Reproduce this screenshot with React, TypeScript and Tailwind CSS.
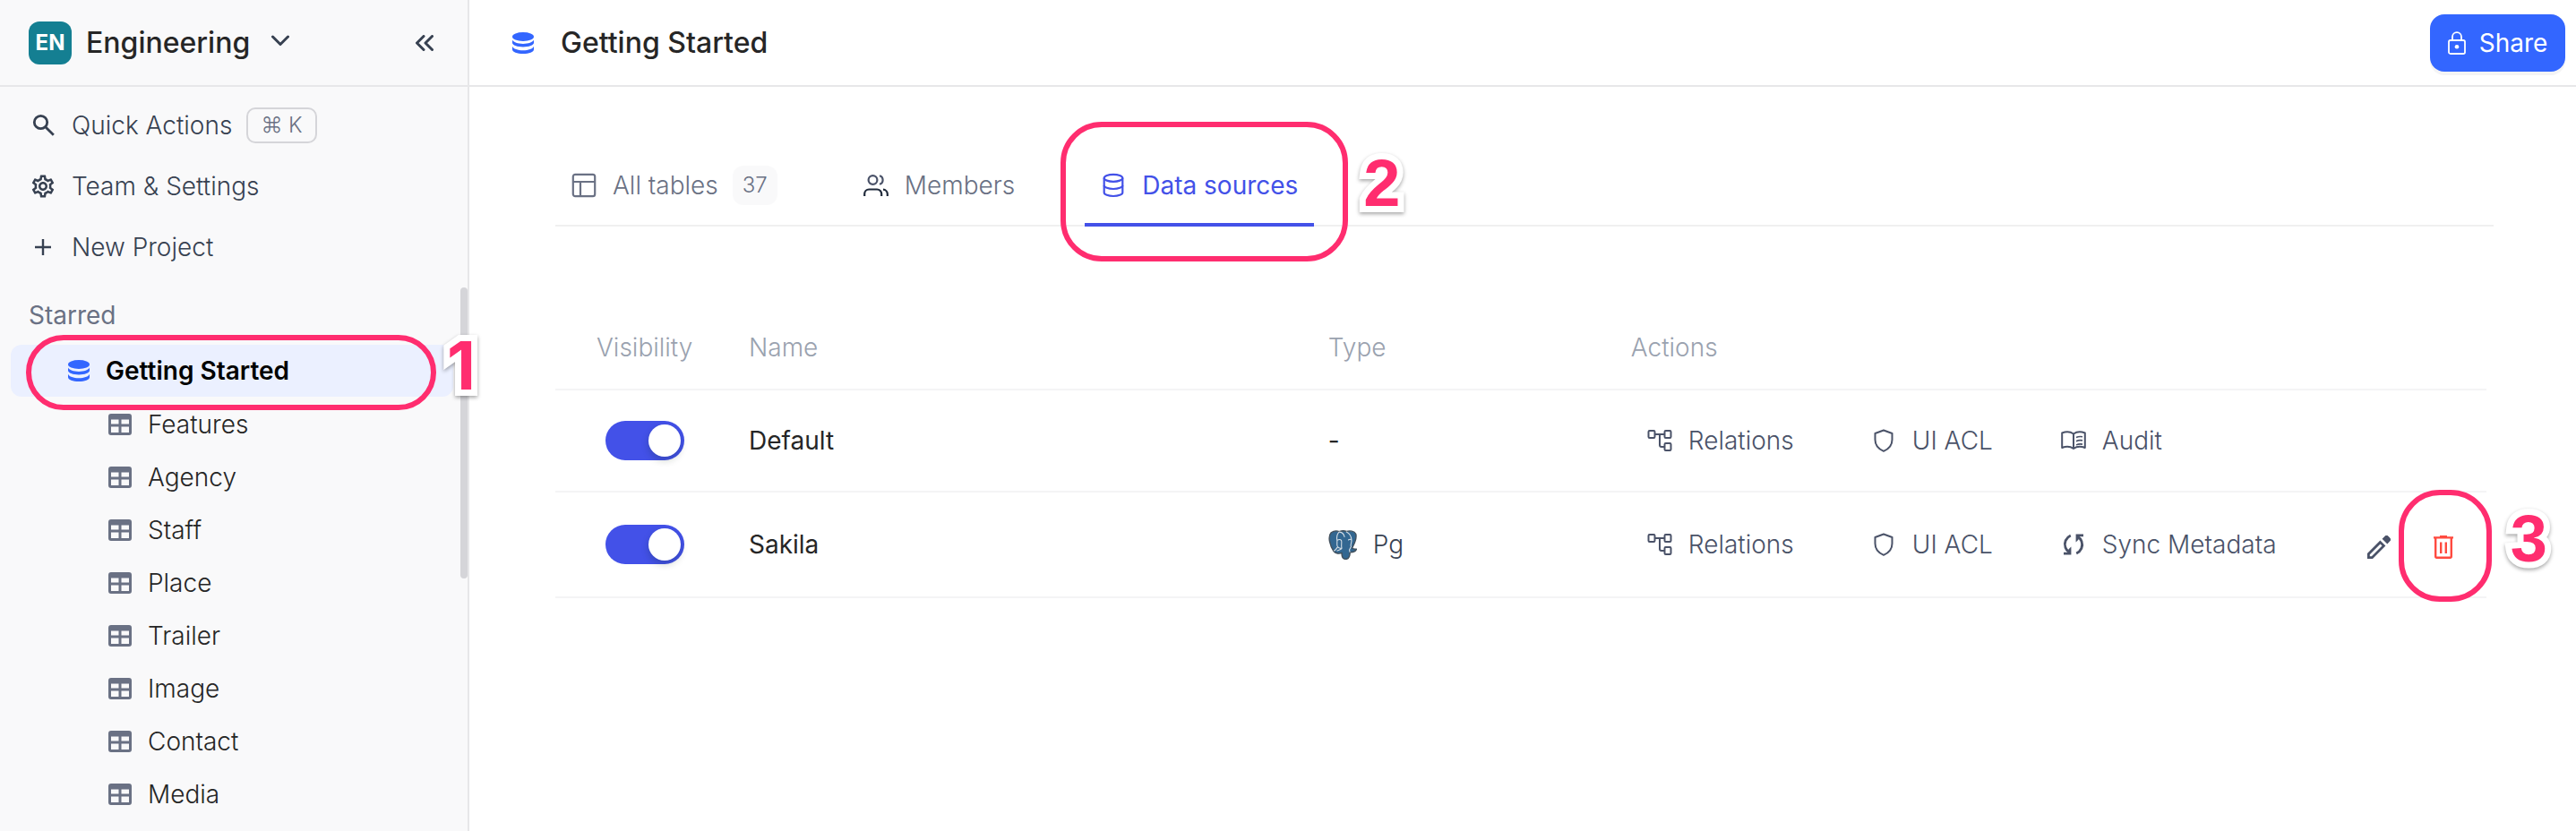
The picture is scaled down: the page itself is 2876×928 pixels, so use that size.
import type { ReactNode } from "react";
import { MdOutlineSettings } from "react-icons/md";

type IconProps = { className?: string };

function DatabaseSolid({ className }: IconProps) {
  return (
    <svg viewBox="0 0 24 24" className={className} fill="currentColor" aria-hidden="true">
      <ellipse cx="12" cy="5" rx="12" ry="5" />
      <path d="M0 8.6v3.2c0 2.6 5.4 4.700 12 4.700s12-2.100 12-4.700V8.600c-1.200 2.700-6.200 4.400-12 4.400S1.200 11.300 0 8.600Z" />
      <path d="M0 15.800v3.400C0 21.900 5.400 24 12 24s12-2.100 12-4.800v-3.400c-1.200 2.800-6.200 4.500-12 4.500S1.200 18.600 0 15.800Z" />
    </svg>
  );
}

function DatabaseOutline({ className }: IconProps) {
  return (
    <svg viewBox="0 0 28 28" className={className} fill="none" stroke="currentColor" strokeWidth="2.200" aria-hidden="true">
      <ellipse cx="14" cy="5.800" rx="10.300" ry="4" />
      <path d="M3.700 5.800v16.200c0 2.200 4.600 4 10.300 4s10.300-1.800 10.300-4V5.800" />
      <path d="M3.700 14c0 2.200 4.600 4 10.300 4s10.300-1.800 10.300-4" />
    </svg>
  );
}

function TableGrid({ className }: IconProps) {
  return (
    <svg viewBox="0 0 26 24" className={className} aria-hidden="true">
      <path
        fill="currentColor"
        fillRule="evenodd"
        d="M3 0h20a3 3 0 0 1 3 3v18a3 3 0 0 1-3 3H3a3 3 0 0 1-3-3V3a3 3 0 0 1 3-3Zm0 6.500v5h8.500v-5Zm11.500 0v5H23v-5ZM3 14.500V21h8.500v-6.500Zm11.500 0V21H23v-6.500Z"
      />
    </svg>
  );
}

function LayoutIcon({ className }: IconProps) {
  return (
    <svg viewBox="0 0 28 28" className={className} fill="none" stroke="currentColor" strokeWidth="2.200" aria-hidden="true">
      <rect x="1.800" y="1.800" width="24.400" height="24.400" rx="2.400" />
      <path d="M1.800 10h24.400M10 10v16.200" />
    </svg>
  );
}

function UsersIcon({ className }: IconProps) {
  return (
    <svg viewBox="0 0 28 28" className={className} fill="none" strokeWidth="2.200" aria-hidden="true">
      <circle cx="10.500" cy="8" r="4.900" stroke="#4a5268" />
      <path d="M18 3.200a5 5 0 0 1 0 9.600" stroke="#4a5268" />
      <path d="M1.200 26v-2.500a5 5 0 0 1 5-5h9a5 5 0 0 1 5 5V26M22 18.700a5 5 0 0 1 4.800 4.800V26" stroke="#1f293a" />
    </svg>
  );
}

function RelationsIcon({ className }: IconProps) {
  return (
    <svg viewBox="0 0 28 26" className={className} fill="none" stroke="currentColor" strokeWidth="2" aria-hidden="true">
      <rect x="1.500" y="2" width="7" height="8" rx="1.200" />
      <rect x="19.500" y="2" width="7" height="8" rx="1.200" />
      <rect x="19.500" y="16" width="7" height="8" rx="1.200" />
      <path d="M8.500 6h11M14 6v12a2 2 0 0 0 2 2h3.500" />
    </svg>
  );
}

function ShieldIcon({ className }: IconProps) {
  return (
    <svg viewBox="0 0 22 26" className={className} fill="none" stroke="currentColor" strokeWidth="2" strokeLinejoin="round" aria-hidden="true">
      <path d="M11 1.500 20.500 5V12c0 6-4 10.500-9.500 12.800C5.500 22.500 1.500 18 1.500 12V5Z" />
    </svg>
  );
}

function BookIcon({ className }: IconProps) {
  return (
    <svg viewBox="0 0 28 22" className={className} fill="none" stroke="currentColor" strokeWidth="2" strokeLinejoin="round" aria-hidden="true">
      <path d="M14 3.500C10.500 1 5 1 1.200 2.500v16.500c4-1.500 9.300-1.500 12.800 1 3.500-2.500 8.800-2.500 12.800-1V2.500C23 1 17.500 1 14 3.500ZM14 3.500V20" />
      <path strokeWidth="1.600" d="M17 7.500c2-1 4.500-1.300 7-.8M17 11.700c2-1 4.500-1.300 7-.8M17 15.900c2-1 4.500-1.300 7-.8" />
    </svg>
  );
}

function SyncIcon({ className }: IconProps) {
  return (
    <svg viewBox="0 0 24 24" className={className} fill="none" stroke="currentColor" strokeWidth="2.800" aria-hidden="true">
      <path d="M8.800 2C3.500 4.500 1 10 3 15.500c.7 2 2 3.700 4 5" />
      <path d="M15.200 22c5.300-2.500 7.800-8 5.800-13.500-.7-2-2-3.700-4-5" />
      <path fill="currentColor" stroke="none" d="M1 23.500h8.400V14.500l-3 3v3.200H1ZM23 .5h-8.400V9.500l3-3V3.300H23Z" />
    </svg>
  );
}

function PostgresLogo({ className }: IconProps) {
  return (
    <svg viewBox="0 0 32 33" className={className} fill="none" strokeLinecap="round" strokeLinejoin="round" aria-hidden="true">
      <path
        fill="#336791"
        stroke="#42505c"
        strokeWidth="1.400"
        d="M3.200 2.800C6 .8 9.800.6 12.200 1.700 15 .6 18 .6 20.200 1.400 24 .4 29 .8 30.700 4.200 32 8.500 29 15.500 26.600 19.800c1 1.600 3 1.200 4.800 1.500-1 2.900-4.600 3.600-7.200 3.500 0 3.200-.8 7.600-4.800 7.600-3.800 0-4.400-3.400-4.400-7-2.600 1.300-7 1-9-1.900C2.200 18-1.200 7.600 3.200 2.800Z"
      />
      <path
        stroke="#d5dee6"
        strokeWidth="1.100"
        d="M12 2.200c-2.600 2.600-2.800 6-2.200 9.500.3 2.600-.8 4.600.6 6.800 1 1.500 2.600 2 4.200 1.600M6.500 23c1.800-1 2.200-2.200 3.500-3.500M12.500 2.100c3.200.3 5 2.600 5.500 5.400M20.300 1.900c3.600 1.800 5.600 6 5.700 9.400.2 2.700-1.600 4.600-.6 7.400M10 11.400c1.600-1.200 3.600-1.200 4.600.2.800 2.600-.6 5.400.4 8.400M15 20.500c-1.500 1.400-3.500 1.800-5 2.500M22.500 11c1-.9 2.400-.9 3.400 0M24 24.300c-.8-1.500-.6-3 .8-4.600"
      />
    </svg>
  );
}

function PencilIcon({ className }: IconProps) {
  return (
    <svg viewBox="0 0 26 26" className={className} aria-hidden="true">
      <path
        fill="currentColor"
        fillRule="evenodd"
        d="M0 20 14.400 5.600l6 6L6 26H0Zm2.800 1.200v2h2L16.500 11.500l-2-2Z"
      />
      <path fill="currentColor" d="m16.600 3.700 2.800-2.800a3 3 0 0 1 4.200 0l1.500 1.500a3 3 0 0 1 0 4.200l-2.800 2.800Z" />
    </svg>
  );
}

function TrashIcon({ className }: IconProps) {
  return (
    <svg viewBox="0 0 22 26" className={className} fill="none" stroke="currentColor" strokeWidth="2.400" aria-hidden="true">
      <path d="M0 2.400h22M7 1.200h8" />
      <path d="M2.200 3v20.300c0 .8.600 1.400 1.400 1.400h14.800c.8 0 1.400-.6 1.400-1.400V3M8.200 7.500v12.500M13.800 7.500v12.500" />
    </svg>
  );
}

function LockIcon({ className }: IconProps) {
  return (
    <svg viewBox="0 0 20 26" className={className} fill="none" stroke="currentColor" strokeWidth="1.800" aria-hidden="true">
      <rect x="1" y="10" width="18" height="15" rx="1.800" />
      <path d="M5 10V6.200a5 5 0 0 1 10 0V10" />
      <circle cx="10" cy="17.300" r="2.300" fill="currentColor" stroke="none" />
    </svg>
  );
}

function Step({ n, className }: { n: string; className: string }) {
  return (
    <span
      aria-hidden="true"
      className={`pointer-events-none absolute z-20 text-[74px] leading-none font-bold text-[#ff2d6f] [-webkit-text-stroke:14px_white] [paint-order:stroke_fill] [stroke-linejoin:round] drop-shadow-[0_2px_2px_rgba(0,0,0,0.35)] ${className}`}
    >
      {n}
    </span>
  );
}

function Ring({ className }: { className: string }) {
  return <span aria-hidden="true" className={`pointer-events-none absolute z-10 border-[6px] border-[#ff2d6f] ${className}`} />;
}

const tables = ["Features", "Agency", "Staff", "Place", "Trailer", "Image", "Contact", "Media"];

function NavButton({ icon, label, children }: { icon: ReactNode; label: string; children?: ReactNode }) {
  return (
    <button className="flex h-[68px] items-center pl-[34px] font-light text-[#374151]">
      <span className="flex w-[28px] justify-center">{icon}</span>
      <span className="ml-[18px]">{label}</span>
      {children}
    </button>
  );
}

function Sidebar() {
  return (
    <aside className="relative flex w-[524px] shrink-0 flex-col border-r-2 border-[#e7e7e9] bg-[#f9f9fa]">
      <div className="flex h-[97px] items-center border-b-2 border-[#e7e7e9] pr-[38px] pl-[32px]">
        <span className="flex size-[48px] items-center justify-center rounded-[12px] bg-[#147f92] text-[24px] font-bold text-white">EN</span>
        <button className="ml-[16px] flex items-center gap-[24px] text-[32px] font-medium text-[#262626]">
          Engineering
          <svg viewBox="0 0 20 20" className="size-[20px]" fill="none" stroke="#374151" strokeWidth="3" strokeLinecap="round" strokeLinejoin="round" aria-hidden="true">
            <path d="m1.500 3 8.500 8.500L18.500 3" />
          </svg>
        </button>
        <button aria-label="Collapse sidebar" className="ml-auto text-[#374151]">
          <svg viewBox="0 0 20 18" className="h-[18px] w-[20px]" fill="none" stroke="currentColor" strokeWidth="3" strokeLinecap="round" strokeLinejoin="round">
            <path d="M9 1.500 1.500 9 9 16.500M18.500 1.500 11 9l7.500 7.500" />
          </svg>
        </button>
      </div>

      <nav className="flex flex-col pt-[9px]">
        <NavButton
          label="Quick Actions"
          icon={
            <svg viewBox="0 0 28 28" className="size-[28px]" fill="none" stroke="currentColor" strokeWidth="2.800" aria-hidden="true">
              <circle cx="11.500" cy="10.500" r="7.200" />
              <path d="m16.500 15.500 9.300 9.300" />
            </svg>
          }
        >
          <kbd className="ml-[16px] flex h-[40px] items-center rounded-[10px] border-2 border-[#d5d5d9] px-[14px] font-[Inter,sans-serif] text-[24px] text-[#6a7184]">⌘ K</kbd>
        </NavButton>
        <NavButton label="Team & Settings" icon={<MdOutlineSettings className="size-[30px] shrink-0" />} />
        <NavButton
          label="New Project"
          icon={
            <svg viewBox="0 0 28 28" className="size-[28px]" fill="none" stroke="currentColor" strokeWidth="2.400" aria-hidden="true">
              <path d="M14 5v18M5 14h18" />
            </svg>
          }
        />
      </nav>

      <h2 className="mt-[19px] pl-[32px] leading-[46px] text-[#6a7184]">Starred</h2>
      <div className="relative mt-[10px] mr-[16px] ml-[12px]">
        <button className="flex h-[58px] w-full items-center rounded-[12px] bg-[#ebf0ff] pl-[64px] font-semibold text-black">
          <DatabaseSolid className="size-[24px] text-[#3366ff]" />
          <span className="ml-[18px]">Getting Started</span>
        </button>
        <Ring className="-top-[11px] right-[19px] -bottom-[15px] left-[17px] rounded-full" />
        <Step n="1" className="-top-[14px] -right-[25px] font-[Inter,sans-serif]" />
      </div>
      <ul className="mt-[1px]">
        {tables.map((name) => (
          <li key={name}>
            <button className="flex h-[59px] w-full items-center pl-[121px] font-light text-[#262626]">
              <TableGrid className="h-[24px] w-[26px] text-[#6a7184]" />
              <span className="ml-[18px]">{name}</span>
            </button>
          </li>
        ))}
      </ul>
      <div className="absolute top-[321px] right-0 h-[325px] w-[8px] rounded-full bg-[#d5d5d9]" />
    </aside>
  );
}

function Toggle({ label }: { label: string }) {
  return (
    <input
      type="checkbox"
      role="switch"
      defaultChecked
      aria-label={label}
      className="ml-[56px] flex h-[44px] w-[88px] appearance-none items-center rounded-full bg-[#c8c8cc] p-[4px] before:size-[36px] before:rounded-full before:bg-white before:shadow-[0_4px_8px_rgba(0,35,11,0.2)] before:content-[''] checked:justify-end checked:bg-[#4351e8]"
    />
  );
}

function Action({ icon, label, className }: { icon: ReactNode; label: string; className?: string }) {
  return (
    <button className={`flex shrink-0 items-center font-light text-[#4a5268] ${className ?? ""}`}>
      <span className="mr-[18px] flex w-[28px] justify-center">{icon}</span>
      {label}
    </button>
  );
}

function CommonActions() {
  return (
    <>
      <Action className="w-[250px]" label="Relations" icon={<RelationsIcon className="h-[26px] w-[28px]" />} />
      <Action className="w-[212px]" label="UI ACL" icon={<ShieldIcon className="h-[26px] w-[22px]" />} />
    </>
  );
}

function Main() {
  return (
    <main className="flex min-w-0 flex-1 flex-col">
      <header className="flex h-[97px] items-center border-b-2 border-[#e7e7e9] pr-[12px] pl-[48px]">
        <DatabaseSolid className="size-[24px] text-[#3366ff]" />
        <h1 className="ml-[30px] text-[32px] font-medium text-[#262626]">Getting Started</h1>
        <button className="ml-auto flex h-[64px] w-[151px] items-center justify-center gap-[15px] rounded-[16px] bg-[#3366ff] text-white shadow-[0_4px_0_0_#f4f4f5]">
          <LockIcon className="h-[26px] w-[20px]" />
          Share
        </button>
      </header>

      <div className="pr-[92px] pl-[96px]">
        <div role="tablist" className="mt-[67px] flex h-[89px] gap-[60px] border-b-2 border-[#f0f0f0] font-light text-[#6a7184]">
          <button role="tab" aria-selected="false" className="flex items-center px-[18px] pb-[2px]">
            <LayoutIcon className="size-[28px]" />
            <span className="ml-[18px]">All tables</span>
            <span className="ml-[16px] flex h-[44px] items-center rounded-[12px] bg-[#f9f9fa] px-[11px] text-[24px]">37</span>
          </button>
          <button role="tab" aria-selected="false" className="flex items-center px-[18px] pb-[2px]">
            <UsersIcon className="size-[28px]" />
            <span className="ml-[18px]">Members</span>
          </button>
          <div className="relative -mb-[2px] flex">
            <button role="tab" aria-selected="true" className="flex items-center border-b-4 border-[#4351e8] px-[18px] font-normal text-[#4351e8]">
              <DatabaseOutline className="size-[28px]" />
              <span className="ml-[18px]">Data sources</span>
            </button>
            <Ring className="-top-[28px] -right-[38px] -bottom-[39px] -left-[27px] rounded-[46px]" />
            <Step n="2" className="top-[4px] -right-[96px] font-['Liberation_Sans',sans-serif]" />
          </div>
        </div>

        <table className="mt-[89px] mr-[8px] w-[calc(100%-8px)] table-fixed border-collapse text-left text-[#262626]">
          <thead className="text-[#9aa2af]">
            <tr className="h-[93px] border-b-2 border-[#f4f4f5]">
              <th className="w-[216px] pl-[46px] font-light">Visibility</th>
              <th className="w-[30%] font-light">Name</th>
              <th className="w-[338px] font-light">Type</th>
              <th className="font-light">Actions</th>
            </tr>
          </thead>
          <tbody>
            <tr className="h-[114px] border-b-2 border-[#f4f4f5]">
              <td><Toggle label="Default visibility" /></td>
              <td>Default</td>
              <td>-</td>
              <td>
                <div className="flex items-center pl-[18px]">
                  <CommonActions />
                  <Action label="Audit" icon={<BookIcon className="h-[22px] w-[28px]" />} />
                </div>
              </td>
            </tr>
            <tr className="h-[118px] border-b-2 border-[#f4f4f5]">
              <td><Toggle label="Sakila visibility" /></td>
              <td>Sakila</td>
              <td>
                <div className="flex items-center gap-[18px] font-light text-[#374151]">
                  <PostgresLogo className="h-[33px] w-[32px]" />
                  Pg
                </div>
              </td>
              <td>
                <div className="flex items-center pl-[18px]">
                  <CommonActions />
                  <Action label="Sync Metadata" icon={<SyncIcon className="size-[24px]" />} />
                  <div className="ml-auto flex items-center gap-[48px] pt-[6px] pr-[37px]">
                    <button aria-label="Edit" className="text-[#4a5268]">
                      <PencilIcon className="size-[26px]" />
                    </button>
                    <div className="relative flex">
                      <button aria-label="Delete" className="text-[#ff4a3f]">
                        <TrashIcon className="h-[26px] w-[22px]" />
                      </button>
                      <Ring className="-top-[51px] -right-[43px] -bottom-[48px] -left-[39px] rounded-[46px]" />
                      <Step n="3" className="-top-[33px] -right-[105px] font-['Liberation_Sans',sans-serif]" />
                    </div>
                  </div>
                </div>
              </td>
            </tr>
          </tbody>
        </table>
      </div>
    </main>
  );
}

export default function App() {
  return (
    <div className="flex min-h-screen bg-white font-[Inter,'Noto_Sans',sans-serif] text-[28px] leading-[40px]">
      <Sidebar />
      <Main />
    </div>
  );
}
